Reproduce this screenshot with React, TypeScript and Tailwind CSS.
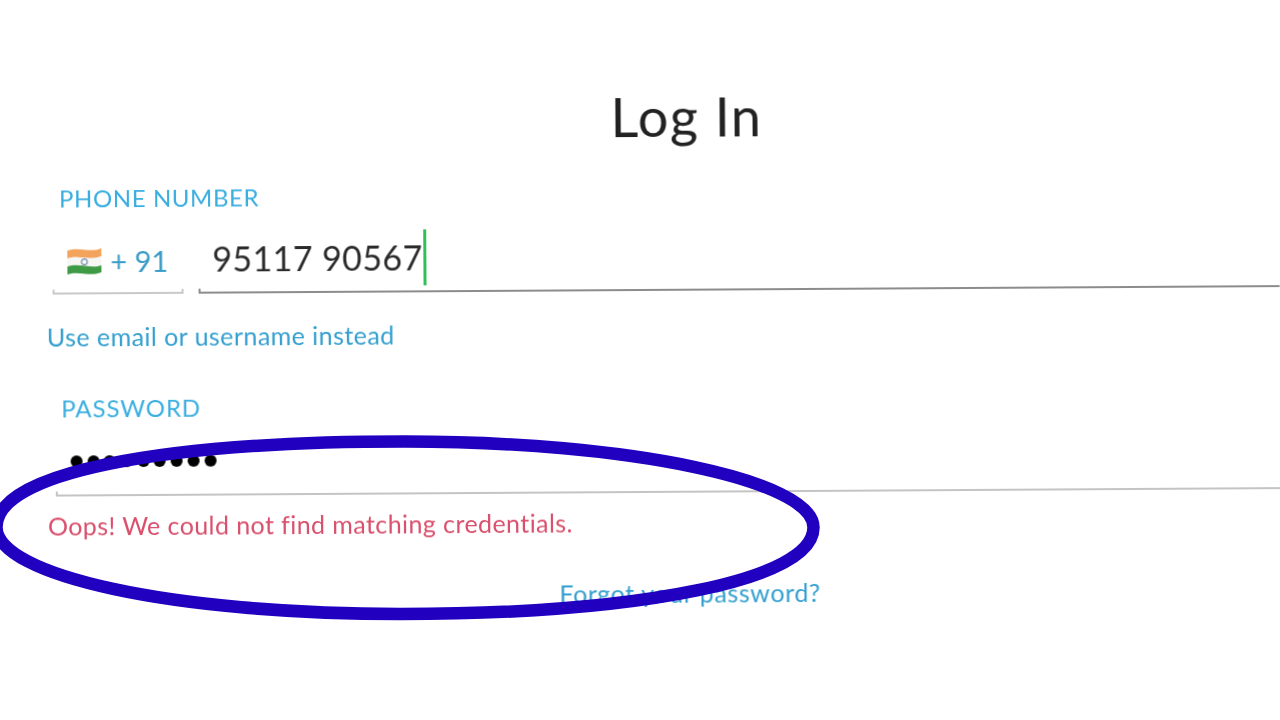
export default function App() {
  const dots = Array.from({ length: 9 });
  return (
    <div className="relative h-[720px] w-[1280px] overflow-hidden bg-white font-['Lato','Liberation_Sans',sans-serif]">
      <main className="flex h-[720px] w-[1280px] rotate-[-0.35deg] flex-col blur-[0.3px]">
        <h1 className="mt-[88px] ml-[588px] w-[200px] text-center text-[54px] leading-[58px] font-normal tracking-[1.500px] text-[#222222]">Log In</h1>

        <label className="mt-[35px] ml-[60px] text-[24px] leading-[28px] tracking-[0.6px] text-[#3aaee0]">PHONE NUMBER</label>

        <div className="mt-[18px] ml-[53px] flex items-end gap-[15px]">
          <div className="flex h-[64px] w-[131px] flex-col">
            <div className="flex flex-1 items-center gap-[8px] pt-[2px] pl-[14px]">
              <svg width="36" height="28" viewBox="0 0 36 28" aria-hidden="true">
                <path d="M1 3C8 1 14 2 19 2.500C25 3 31 3 35 1V9C30 11 24 11 19 10.500C13 10 7 9 1 11Z" fill="#f4a35c" />
                <path d="M1 11C7 9 13 10 19 10.500C24 11 30 11 35 9V18C30 20 24 19 19 18.500C13 18 7 17 1 19Z" fill="#f6f6f4" />
                <path d="M1 19C7 17 13 18 19 18.500C24 19 30 20 35 18V25C30 27 24 27 19 26.500C13 26 7 25 1 27Z" fill="#3f9a45" />
                <circle cx="18" cy="14.500" r="3" fill="none" stroke="#4a6a9a" strokeWidth="1" />
              </svg>
              <span className="text-[29px] leading-[34px] text-[#3a9cc8]">+ 91</span>
            </div>
            <div className="h-[5px] border-x-2 border-b-2 border-[#c9c9c9]" />
          </div>
          <div className="flex h-[64px] flex-1 flex-col">
            <div className="flex flex-1 items-center pb-[1px] pl-[14px]">
              <span className="text-[34px] leading-[40px] tracking-[0.4px] text-[#2b2b2b]">95117 90567</span>
              <span className="ml-[1px] h-[56px] w-[3px] bg-[#2fc05a]" />
            </div>
            <div className="h-[5px] border-b-2 border-l-2 border-[#8c8c8c]" />
          </div>
        </div>

        <a className="mt-[27px] ml-[47px] text-[25px] leading-[30px] tracking-[0.45px] text-[#339fcf]">Use email or username instead</a>

        <label className="mt-[43px] ml-[61px] text-[24px] leading-[28px] tracking-[0.9px] text-[#3aaee0]">PASSWORD</label>

        <div className="mt-[33px] ml-[55px] flex h-[41px] flex-col justify-between">
          <div className="flex gap-[4.700px] pl-[15px]">
            {dots.map((_, i) => (
              <span key={i} className="h-[12px] w-[12px] rounded-full bg-black" />
            ))}
          </div>
          <div className="h-[5px] border-b-2 border-l-2 border-[#c4c4c4]" />
        </div>

        <p className="mt-[14px] ml-[47px] text-[25px] leading-[30px] tracking-[0.42px] text-[#d94f6c]">Oops! We could not find matching credentials.</p>

        <a className="mt-[41px] ml-[558px] text-[25px] leading-[30px] tracking-[0.6px] text-[#339fcf]">Forgot your password?</a>
      </main>

      <svg className="pointer-events-none absolute top-0 left-0" width="1280" height="720" viewBox="0 0 1280 720" aria-hidden="true">
        <path
          d="M-3.500 527C-3.500 474 153 441.500 405 441.500C630 441.500 813.500 480.500 813.500 527.500C813.500 580 640 614 400 614C173 614 -3.500 576 -3.500 527Z"
          fill="none"
          stroke="#2100c0"
          strokeWidth="12.500"
        />
      </svg>
    </div>
  );
}
